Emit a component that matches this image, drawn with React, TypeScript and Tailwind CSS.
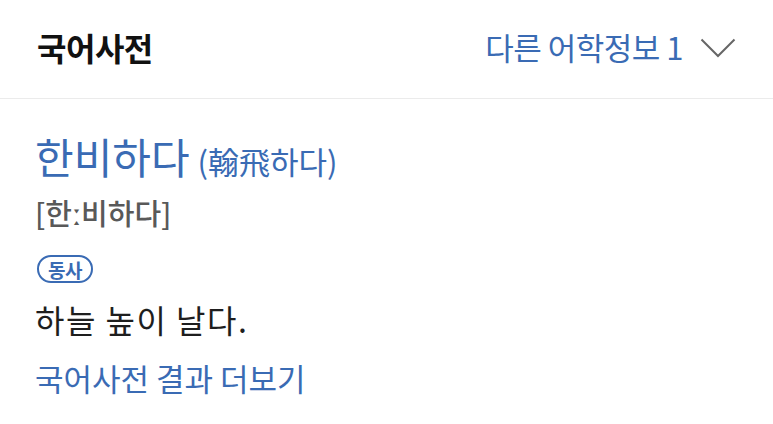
export default function App() {
  return (
    <div className="w-[773px] h-[424px] bg-white font-['Noto_Sans_CJK_KR','Noto_Sans',sans-serif] overflow-hidden">
      {/* Header */}
      <div className="h-[99px] flex items-center justify-between pl-[37px] pr-[37px] pb-[4px] border-b border-[#ebebeb]">
        <h1 className="text-[32px] font-bold text-[#111] tracking-[-0.5px]">국어사전</h1>
        <button className="flex items-center gap-[17px] text-[#3a6bb4]">
          <span className="text-[31px] tracking-[-0.5px]">다른 어학정보 1</span>
          <svg width="36" height="20" viewBox="0 0 36 20" fill="none" className="mt-[2px]">
            <polyline points="1.5,1.5 18,18 34.5,1.5" stroke="#666" strokeWidth="2" />
          </svg>
        </button>
      </div>

      {/* Entry */}
      <div className="pl-[35px] pt-[33px]">
        <div className="flex items-baseline gap-[8px] text-[#3a6bb4] h-[48px]">
          <span className="text-[42px] leading-[48px]">한비하다</span>
          <span className="text-[31px]">(翰飛하다)</span>
        </div>
        <div className="mt-[14px] text-[29px] leading-[36px] font-medium text-[#595959]">[한ː비하다]</div>
        <div className="mt-[25px] ml-[2px] inline-flex items-center justify-center h-[28px] w-[56px] rounded-full border-2 border-[#3a6bb4] text-[19px] font-bold text-[#3a6bb4] leading-none tracking-[-0.5px]">
          동사
        </div>
        <p className="mt-[16px] text-[32px] leading-[40px] text-[#1e1e1e] tracking-[1.5px]">하늘 높이 날다.</p>
        <a className="block mt-[19px] text-[31px] leading-[40px] text-[#3a6bb4]">국어사전 결과 더보기</a>
      </div>
    </div>
  );
}
